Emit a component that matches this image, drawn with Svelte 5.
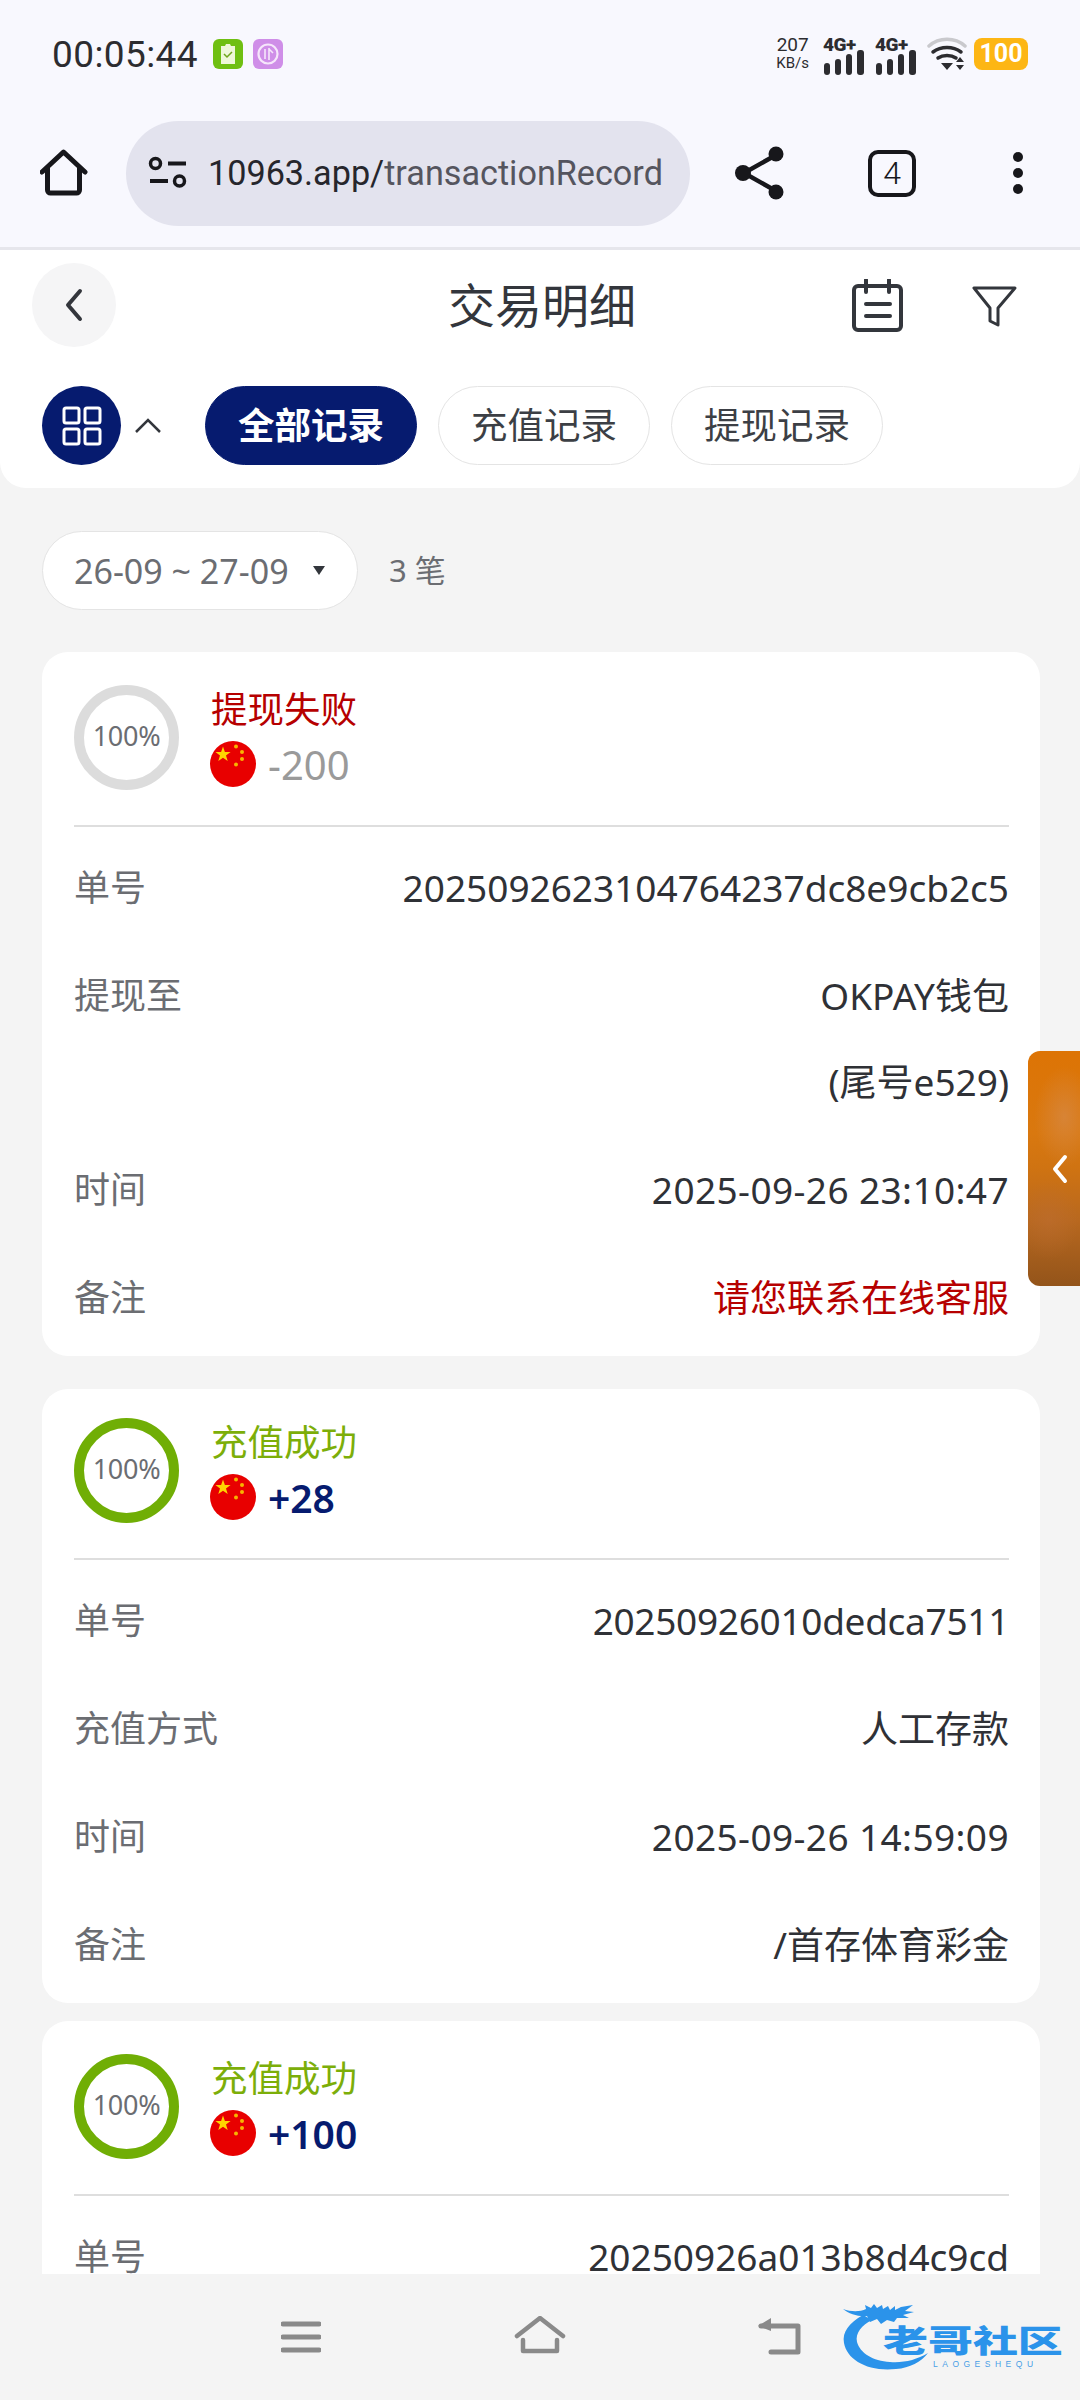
<script lang="ts">
	type Row = { label: string; value: string[]; tone?: string };
	type Record = {
		status: string;
		kind: 'fail' | 'ok';
		amount: string;
		rows: Row[];
	};

	const tabs = ['全部记录', '充值记录', '提现记录'];

	const records: Record[] = [
		{
			status: '提现失败',
			kind: 'fail',
			amount: '-200',
			rows: [
				{ label: '单号', value: ['2025092623104764237dc8e9cb2c5'] },
				{ label: '提现至', value: ['OKPAY钱包', '(尾号e529)'] },
				{ label: '时间', value: ['2025-09-26 23:10:47'], tone: 'date' },
				{ label: '备注', value: ['请您联系在线客服'], tone: 'red' }
			]
		},
		{
			status: '充值成功',
			kind: 'ok',
			amount: '+28',
			rows: [
				{ label: '单号', value: ['20250926010dedca7511'], tone: 'tight' },
				{ label: '充值方式', value: ['人工存款'] },
				{ label: '时间', value: ['2025-09-26 14:59:09'], tone: 'date' },
				{ label: '备注', value: ['/首存体育彩金'] }
			]
		},
		{
			status: '充值成功',
			kind: 'ok',
			amount: '+100',
			rows: [{ label: '单号', value: ['20250926a013b8d4c9cd'] }]
		}
	];
</script>

{#snippet flag()}
	<svg class="flag" viewBox="0 0 46 46" aria-hidden="true">
		<circle cx="23" cy="23" r="23" fill="#e80000" />
		<polygon
			fill="#ffd400"
			points="13,5.500 14.900,11 20.600,11.100 16,14.500 17.700,20 13,16.700 8.300,20 10,14.500 5.400,11.100 11.100,11"
		/>
		<circle cx="26" cy="5.500" r="2" fill="#f7b500" />
		<circle cx="32" cy="11" r="2" fill="#f7b500" />
		<circle cx="32" cy="18" r="2" fill="#f7b500" />
		<circle cx="26" cy="23.500" r="2" fill="#f7b500" />
	</svg>
{/snippet}

<div class="page">
	<!-- status bar -->
	<div class="statusbar">
		<span class="clock">00:05:44</span>
		<svg class="badge" viewBox="0 0 30 30" aria-hidden="true">
			<rect width="30" height="30" rx="6" fill="#6fbf12" />
			<path d="M8 7h4l1-2h4l1 2h4v18H8z" fill="#eef7d8" />
			<path d="M11 15l3 3 5-5" fill="none" stroke="#6fa51a" stroke-width="1.500" />
		</svg>
		<svg class="badge" viewBox="0 0 30 30" aria-hidden="true">
			<rect width="30" height="30" rx="6" fill="#cf8ee8" />
			<circle cx="15" cy="15" r="9.500" fill="none" stroke="#f6e6fb" stroke-width="2.200" />
			<path d="M12 10v10M16 9v12M16 10l4 4" fill="none" stroke="#f6e6fb" stroke-width="1.600" />
		</svg>
		<div class="status-right">
			<div class="speed"><span>207</span><span class="unit">KB/s</span></div>
			{#each [0, 1] as s (s)}
				<svg class="signal" viewBox="0 -4 42 42" aria-hidden="true">
					<text x="0" y="14" class="net">4G+</text>
					<rect x="1" y="26" width="6" height="12" rx="3" fill="#2c2c30" />
					<rect x="12" y="22" width="6" height="16" rx="3" fill="#2c2c30" />
					<rect x="23" y="17" width="6" height="21" rx="3" fill="#2c2c30" />
					<rect x="34" y="13" width="7" height="25" rx="3" fill="#2c2c30" />
				</svg>
			{/each}
			<svg class="wifi" viewBox="0 0 40 34" aria-hidden="true">
				<path d="M2 9C12 0 28 0 38 9" fill="none" stroke="#c9c9cd" stroke-width="3.500" stroke-linecap="round" />
				<path d="M6 15c8-6 20-6 28 0M11 21c5-3.500 13-3.500 18 0" fill="none" stroke="#2c2c30" stroke-width="3.500" stroke-linecap="round" />
				<path d="M14 26h12l-6 7zM29 25l4-5 4 5zM29 28h8l-4 5z" fill="#2c2c30" />
			</svg>
			<div class="battery">100</div>
		</div>
	</div>

	<!-- browser bar -->
	<div class="browserbar">
		<svg class="bb-home" viewBox="0 0 48 48" aria-hidden="true">
			<path d="M2 23L23.500 3 45 23" fill="none" stroke="#17171b" stroke-width="5" stroke-linecap="round" stroke-linejoin="round" />
			<path d="M7.500 19v22a3 3 0 0 0 3 3h26a3 3 0 0 0 3-3V19" fill="none" stroke="#17171b" stroke-width="5" />
		</svg>
		<div class="urlbar">
			<svg class="tune" viewBox="0 0 40 34" aria-hidden="true">
				<circle cx="7.500" cy="7.500" r="5" fill="none" stroke="#17171b" stroke-width="3.500" />
				<path d="M20 7.500h18M2 25h18" stroke="#17171b" stroke-width="4" />
				<circle cx="31.500" cy="25" r="5" fill="none" stroke="#17171b" stroke-width="3.500" />
			</svg>
			<span class="url">10963.app/<span class="url-path">transactionRecord</span></span>
		</div>
		<svg class="bb-share" viewBox="0 0 50 54" aria-hidden="true">
			<path d="M41 9L9 27l32 18" fill="none" stroke="#17171b" stroke-width="4.500" />
			<circle cx="41" cy="8" r="7.500" fill="#17171b" />
			<circle cx="8" cy="27" r="8" fill="#17171b" />
			<circle cx="41" cy="46" r="7.500" fill="#17171b" />
		</svg>
		<div class="tabcount">4</div>
		<svg class="bb-more" viewBox="0 0 12 44" aria-hidden="true">
			<circle cx="6" cy="6" r="5" fill="#17171b" />
			<circle cx="6" cy="22" r="5" fill="#17171b" />
			<circle cx="6" cy="38" r="5" fill="#17171b" />
		</svg>
	</div>

	<!-- page header -->
	<header class="head">
		<div class="titlebar">
			<button class="back" aria-label="返回">
				<svg viewBox="0 0 22 36" aria-hidden="true">
					<path d="M17 4L5 18l12 14" fill="none" stroke="#33363c" stroke-width="4" stroke-linecap="round" stroke-linejoin="round" />
				</svg>
			</button>
			<h1>交易明细</h1>
			<svg class="calendar" viewBox="0 0 52 53" aria-hidden="true">
				<rect x="2" y="7" width="47" height="44" rx="4" fill="none" stroke="#33363c" stroke-width="4" />
				<path d="M14 1v12M37 1v12" stroke="#33363c" stroke-width="4" stroke-linecap="round" />
				<path d="M14 25h24M14 37h24" stroke="#33363c" stroke-width="4" stroke-linecap="round" />
			</svg>
			<svg class="funnel" viewBox="0 0 45 41" aria-hidden="true">
				<path d="M2 2h41L26 22v17l-8-4V22z" fill="none" stroke="#33363c" stroke-width="3" stroke-linejoin="round" />
			</svg>
		</div>
		<div class="tabrow">
			<div class="grid-btn">
				<svg viewBox="0 0 40 40" aria-hidden="true">
					<rect x="2" y="2" width="15" height="15" rx="2" fill="none" stroke="#fff" stroke-width="3" />
					<rect x="23" y="2" width="15" height="15" rx="2" fill="none" stroke="#fff" stroke-width="3" />
					<rect x="2" y="23" width="15" height="15" rx="2" fill="none" stroke="#fff" stroke-width="3" />
					<rect x="23" y="23" width="15" height="15" rx="2" fill="none" stroke="#fff" stroke-width="3" />
				</svg>
			</div>
			<svg class="caret-up" viewBox="0 0 28 16" aria-hidden="true">
				<path d="M2 14L14 2l12 12" fill="none" stroke="#33363c" stroke-width="2.500" />
			</svg>
			{#each tabs as tab, i (tab)}
				<button class="tab" class:active={i === 0}>{tab}</button>
			{/each}
		</div>
	</header>

	<main class="list">
		<div class="filter">
			<div class="range">26-09 ~ 27-09<span class="tri"></span></div>
			<span class="count">3 笔</span>
		</div>

		{#each records as rec, i (i)}
			<section class="card" class:second={i === 1}>
				<div class="summary">
					<div class="ring" class:ok={rec.kind === 'ok'}>100%</div>
					<div class="info">
						<div class="status {rec.kind}">{rec.status}</div>
						<div class="amount-line">
							{@render flag()}
							<span class="amount {rec.kind}">{rec.amount}</span>
						</div>
					</div>
				</div>
				<div class="rows">
					{#each rec.rows as row (row.label)}
						<div class="row">
							<span class="label">{row.label}</span>
							<div class="value {row.tone ?? ''}">
								{#each row.value as line (line)}
									<div>{line}</div>
								{/each}
							</div>
						</div>
					{/each}
				</div>
			</section>
		{/each}

		<!-- floating side drawer handle -->
		<div class="drawer">
			<svg viewBox="0 0 16 30" aria-hidden="true">
				<path d="M13 3L3 15l10 12" fill="none" stroke="#fff" stroke-width="4" stroke-linecap="round" stroke-linejoin="round" />
			</svg>
		</div>
	</main>

	<!-- system nav -->
	<nav class="sysnav">
		<svg class="nav-menu" viewBox="0 0 40 32" aria-hidden="true">
			<path d="M2 3h36M2 16h36M2 29h36" stroke="#8a8a8a" stroke-width="5" stroke-linecap="round" />
		</svg>
		<svg class="nav-home" viewBox="0 0 52 38" aria-hidden="true">
			<path d="M3 20L26 2l23 18M9 24v11h34V24" fill="none" stroke="#8a8a8a" stroke-width="4.500" stroke-linecap="round" stroke-linejoin="round" />
		</svg>
		<svg class="nav-back" viewBox="0 0 44 38" aria-hidden="true">
			<path d="M4 9h37v26H14" fill="none" stroke="#8a8a8a" stroke-width="5" stroke-linecap="round" stroke-linejoin="round" />
			<path d="M14 1L1 9l13 5z" fill="#8a8a8a" />
		</svg>

		<div class="watermark">
			<svg class="dragon" viewBox="0 0 100 84" aria-hidden="true">
				<path d="M33 25C19 33 12 42 14 53c3 17 24 29 52 26 14-1 25-7 32-16-12 7-24 10-38 9C43 71 30 63 27 52c-2-9 5-17 15-22z" fill="#2b93ea" />
				<path d="M13 19c8 3 17 3 23 0l-1-4 6 3 3-4 3 4 5-3 1 4 5-3 2 4 5-4 0 4 6-3 12-2-8 6 9 1-11 3 6 3-12 0-3 4-7-2-6 4-4-5-7 3-3-6c-8 1-18-2-24-7z" fill="#2b93ea" />
			</svg>
			<div class="wm-name">老哥社区</div>
			<div class="wm-sub">LAOGESHEQU</div>
		</div>
	</nav>
</div>

<style>
	:global(body) {
		margin: 0;
		background: #f4f4f4;
	}

	.page {
		width: 1080px;
		height: 2400px;
		display: flex;
		flex-direction: column;
		overflow: hidden;
		background: #f4f4f4;
		font-family: 'Noto Sans', 'Noto Sans CJK SC', sans-serif;
		color: #2f3136;
	}

	button {
		font-family: inherit;
		padding: 0;
	}

	/* ── status bar ── */
	.statusbar {
		height: 103px;
		flex-shrink: 0;
		display: flex;
		align-items: center;
		gap: 10px;
		padding: 5px 52px 0 52px;
		box-sizing: border-box;
		background: #f8f8fe;
	}

	.clock {
		font-family: Roboto, sans-serif;
		font-size: 37px;
		color: #2c2c30;
		margin-right: 5px;
		letter-spacing: 0.4px;
	}

	.badge {
		width: 30px;
		height: 30px;
	}

	.status-right {
		margin-left: auto;
		display: flex;
		align-items: center;
	}

	.speed {
		display: flex;
		flex-direction: column;
		align-items: center;
		font-family: Roboto, sans-serif;
		font-size: 19px;
		line-height: 19px;
		color: #2c2c30;
		margin-right: 14px;
	}

	.speed .unit {
		font-size: 15px;
	}

	.signal {
		width: 42px;
		height: 42px;
		margin-right: 10px;
	}

	.net {
		font-family: Roboto, sans-serif;
		font-weight: 900;
		font-size: 19px;
		letter-spacing: -0.5px;
		fill: #2c2c30;
	}

	.wifi {
		width: 40px;
		height: 34px;
		margin-right: 7px;
	}

	.battery {
		width: 54px;
		height: 32px;
		border-radius: 8px;
		background: #fdb614;
		color: #fff;
		font-family: Roboto, sans-serif;
		font-weight: 700;
		font-size: 25px;
		line-height: 32px;
		text-align: center;
	}

	/* ── browser bar ── */
	.browserbar {
		height: 147px;
		flex-shrink: 0;
		display: flex;
		align-items: center;
		box-sizing: border-box;
		padding-bottom: 4px;
		background: #f8f8fe;
		border-bottom: 3px solid #e6e6ec;
	}

	.bb-home {
		width: 48px;
		height: 48px;
		margin-left: 40px;
	}

	.urlbar {
		width: 564px;
		height: 105px;
		margin-left: 38px;
		border-radius: 53px;
		background: #e3e3ee;
		display: flex;
		align-items: center;
		box-sizing: border-box;
		padding-left: 22px;
	}

	.tune {
		width: 40px;
		height: 34px;
		margin-right: 20px;
	}

	.url {
		font-family: Roboto, sans-serif;
		font-size: 34.200px;
		color: #26262c;
		white-space: nowrap;
	}

	.url-path {
		color: #55555e;
	}

	.bb-share {
		width: 50px;
		height: 54px;
		margin-left: 45px;
	}

	.tabcount {
		width: 48px;
		height: 47px;
		margin-left: 83px;
		box-sizing: border-box;
		border: 4px solid #17171b;
		border-radius: 10px;
		display: flex;
		align-items: center;
		justify-content: center;
		font-family: Roboto, sans-serif;
		font-weight: 300;
		font-size: 32px;
		color: #17171b;
	}

	.bb-more {
		width: 12px;
		height: 44px;
		margin-left: 96px;
	}

	/* ── header ── */
	.head {
		height: 238px;
		flex-shrink: 0;
		box-sizing: border-box;
		background: #fff;
		border-radius: 0 0 26px 26px;
		padding: 13px 0 0 0;
	}

	.titlebar {
		display: flex;
		align-items: center;
		height: 84px;
		padding-left: 32px;
	}

	.back {
		width: 84px;
		height: 84px;
		border: none;
		border-radius: 50%;
		background: #f5f5f6;
		display: flex;
		align-items: center;
		justify-content: center;
	}

	.back svg {
		width: 22px;
		height: 36px;
	}

	h1 {
		margin: 0 0 0 332px;
		width: 188px;
		font-weight: 400;
		font-size: 47px;
		line-height: 60px;
		white-space: nowrap;
		color: #33363c;
	}

	.calendar {
		width: 52px;
		height: 53px;
		margin-left: 216px;
	}

	.funnel {
		width: 45px;
		height: 41px;
		margin-left: 68px;
		margin-top: 3px;
	}

	.tabrow {
		display: flex;
		align-items: center;
		margin-top: 39px;
		padding-left: 42px;
	}

	.grid-btn {
		width: 79px;
		height: 79px;
		border-radius: 50%;
		background: #061b6f;
		display: flex;
		align-items: center;
		justify-content: center;
	}

	.grid-btn svg {
		width: 40px;
		height: 40px;
	}

	.caret-up {
		width: 28px;
		height: 16px;
		margin: 0 43px 0 13px;
	}

	.tab {
		width: 212px;
		height: 79px;
		margin-right: 21px;
		border-radius: 40px;
		border: 1px solid #e4e4e4;
		background: #fff;
		color: #3c3f45;
		font-size: 36.500px;
		line-height: 1;
	}

	.tab.active {
		border-color: #061b6f;
		background: #061b6f;
		color: #fff;
		font-weight: 700;
	}

	/* ── list ── */
	.list {
		position: relative;
		flex: 1;
		min-height: 0;
		overflow: hidden;
		padding: 43px 40px 0 42px;
	}

	.filter {
		display: flex;
		align-items: center;
		height: 79px;
		margin-bottom: 42px;
	}

	.range {
		width: 316px;
		height: 79px;
		box-sizing: border-box;
		border: 1px solid #e4e4e4;
		border-radius: 40px;
		background: #fff;
		display: flex;
		align-items: center;
		padding-left: 31px;
		font-size: 34px;
		color: #6b6d72;
		white-space: nowrap;
	}

	.tri {
		width: 0;
		height: 0;
		margin-left: 24px;
		border-left: 6px solid transparent;
		border-right: 6px solid transparent;
		border-top: 9px solid #33363c;
	}

	.count {
		margin: 0 0 4px 31px;
		font-size: 31px;
		color: #6b6d72;
	}

	.card {
		background: #fff;
		border-radius: 26px;
		padding: 33px 31px 4px 32px;
		margin-bottom: 33px;
	}

	.card.second {
		margin-bottom: 18px;
		padding-top: 29px;
	}

	.summary {
		display: flex;
		align-items: center;
		padding-bottom: 35px;
		border-bottom: 2px solid #dedede;
	}

	.ring {
		width: 105px;
		height: 105px;
		box-sizing: border-box;
		border: 10px solid #dcdcdc;
		border-radius: 50%;
		padding-bottom: 4px;
		display: flex;
		align-items: center;
		justify-content: center;
		font-size: 27px;
		letter-spacing: -0.3px;
		color: #6b6d72;
	}

	.ring.ok {
		border-color: #70ae05;
	}

	.info {
		margin-left: 32px;
	}

	.status {
		font-size: 36.500px;
		line-height: 46px;
	}

	.status.fail {
		color: #b60000;
	}

	.status.ok {
		color: #7cae09;
	}

	.amount-line {
		display: flex;
		align-items: center;
		height: 50px;
		margin-top: 7px;
	}

	.flag {
		width: 46px;
		height: 46px;
		margin-left: -1px;
	}

	.amount {
		margin-left: 12px;
		font-size: 39px;
	}

	.amount.fail {
		font-size: 40px;
		color: #9a9a9a;
	}

	.amount.ok {
		color: #061b6f;
		font-weight: 600;
	}

	.rows {
		padding-top: 7px;
	}

	.row {
		display: flex;
		justify-content: space-between;
		padding: 11px 0;
	}

	.label {
		font-size: 36px;
		line-height: 86px;
		color: #6b6d72;
		white-space: nowrap;
	}

	.value {
		font-size: 37px;
		line-height: 86px;
		color: #2f3136;
		text-align: right;
		white-space: nowrap;
	}

	.value.red {
		color: #b60000;
	}

	.value.date {
		letter-spacing: 0.4px;
	}

	.value.tight {
		letter-spacing: -0.3px;
	}

	.drawer {
		position: absolute;
		top: 563px;
		right: 0;
		width: 52px;
		height: 235px;
		border-radius: 12px 0 0 12px;
		background:
			radial-gradient(ellipse 30px 50px at 70% 28%, rgba(214, 140, 80, 0.6), transparent),
			radial-gradient(ellipse 30px 40px at 40% 72%, rgba(190, 110, 50, 0.5), transparent),
			linear-gradient(180deg, #dd7405 0%, #d9780f 35%, #cf7312 50%, #b8681f 72%, #93541a 100%);
		display: flex;
		align-items: center;
		padding-left: 24px;
		box-sizing: border-box;
	}

	.drawer svg {
		width: 16px;
		height: 30px;
	}

	/* ── system nav ── */
	.sysnav {
		position: relative;
		height: 126px;
		flex-shrink: 0;
		display: flex;
		align-items: center;
		background: #f4f4f4;
	}

	.nav-menu {
		width: 40px;
		height: 32px;
		margin-left: 281px;
	}

	.nav-home {
		width: 52px;
		height: 38px;
		margin: 0 0 5px 193px;
	}

	.nav-back {
		width: 44px;
		height: 38px;
		margin: 0 0 3px 191px;
	}

	.watermark {
		position: absolute;
		left: 830px;
		top: 16px;
		width: 240px;
		height: 100px;
	}

	.dragon {
		position: absolute;
		left: 0;
		top: 0;
		width: 100px;
		height: 84px;
	}

	.wm-name {
		position: absolute;
		left: 53px;
		top: 33px;
		font-size: 31px;
		line-height: 34px;
		font-weight: 900;
		color: #2b93ea;
		white-space: nowrap;
		transform: scaleX(1.45);
		transform-origin: left center;
	}

	.wm-sub {
		position: absolute;
		left: 103px;
		top: 69px;
		font-family: 'Liberation Sans', sans-serif;
		font-size: 8.500px;
		line-height: 10px;
		letter-spacing: 4.500px;
		color: #4a9fe6;
		white-space: nowrap;
	}
</style>
